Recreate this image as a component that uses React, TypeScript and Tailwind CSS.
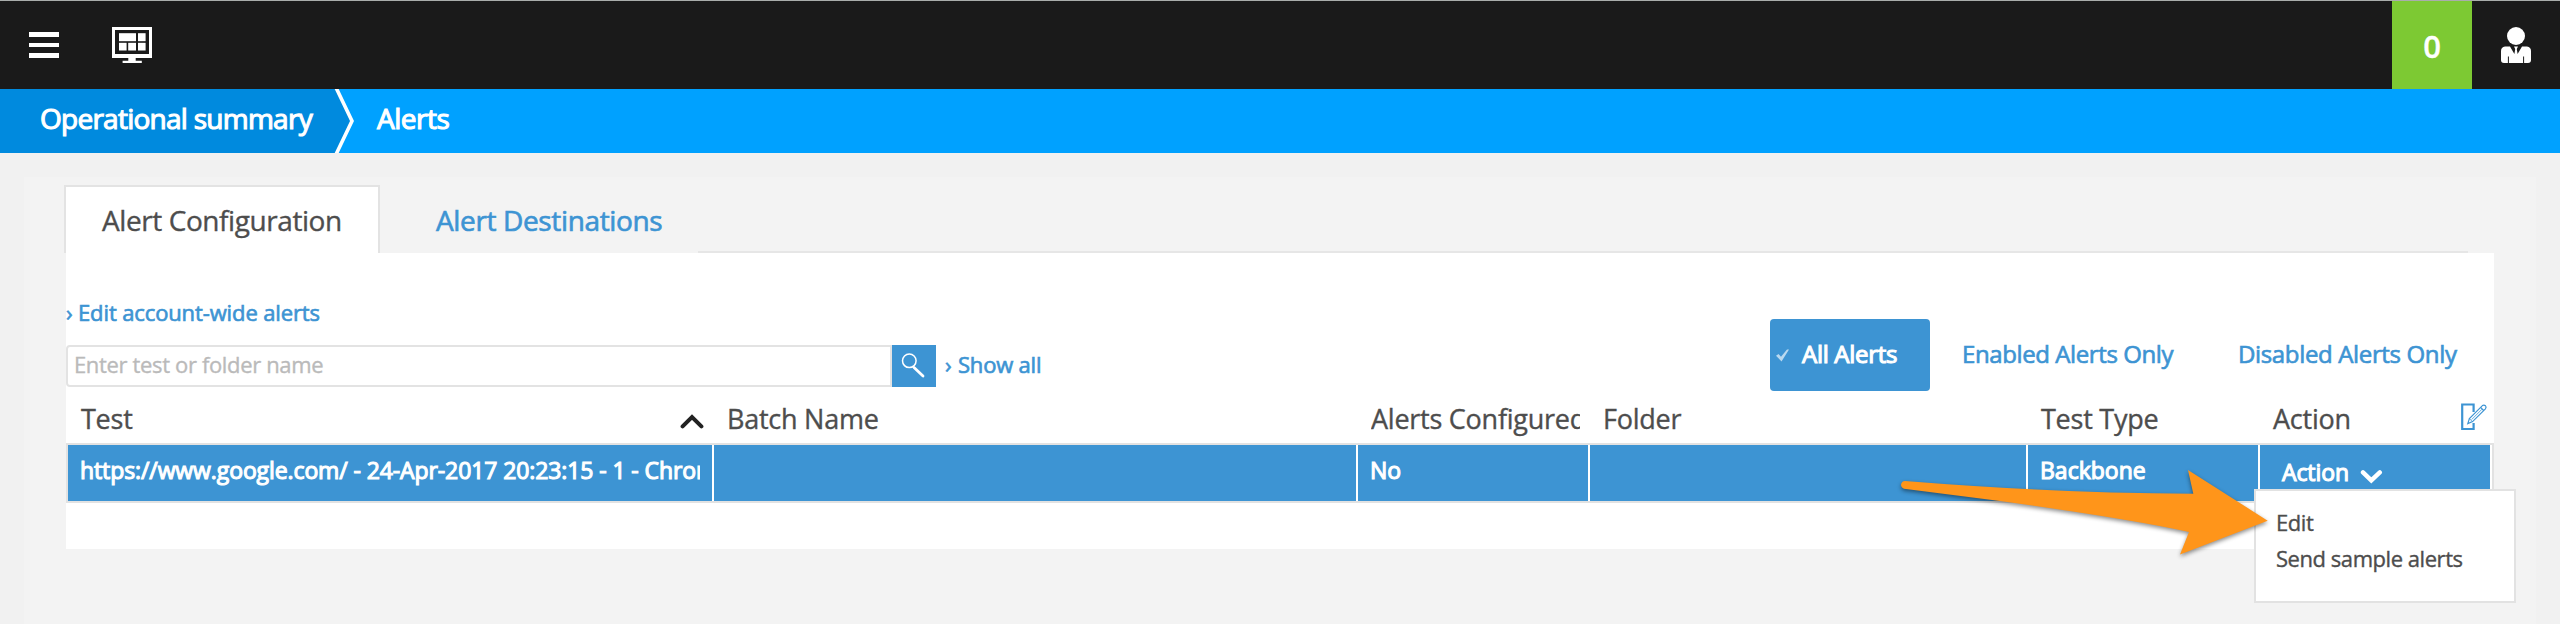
import type { ReactNode } from "react";

const COLUMNS = "grid grid-cols-[646px_644px_232px_438px_232px_232px]";
const BOLDER = "[-webkit-text-stroke:1.1px_currentColor]";
const MEDIUM = "[-webkit-text-stroke:0.65px_currentColor]";
const REGULAR = "[-webkit-text-stroke:0.35px_currentColor]";

function MonitorIcon() {
  return (
    <svg width="40" height="36" viewBox="0 0 40 36" fill="#fff">
      <path fillRule="evenodd" d="M0 0H40V31H0ZM3 3V27H37V3Z" />
      <rect x="7" y="6.2" width="17" height="8" />
      <rect x="26" y="6.2" width="7.6" height="8" />
      <rect x="7" y="15.8" width="7.6" height="7.7" />
      <rect x="16.2" y="15.8" width="7.8" height="7.7" />
      <rect x="26" y="15.8" width="7.6" height="7.7" />
      <path d="M16.3 31H23.7V33.8H29.8V36H10.6V33.8H16.3Z" />
    </svg>
  );
}

function UserIcon() {
  return (
    <svg width="30" height="36" viewBox="0 0 30 36">
      <circle cx="15" cy="9" r="9" fill="#fff" />
      <path
        d="M4 19.4H9L13.4 27L14.2 22L13 19.6H17L15.8 22L16.6 27L21 19.4H26Q30 20 30 24V33Q30 36 27 36H3Q0 36 0 33V24Q0 20 4 19.4Z"
        fill="#fff"
      />
      <path d="M7.4 29.5V36M22.6 29.5V36" stroke="#1a1a1a" strokeWidth="1" />
    </svg>
  );
}

function EditIcon() {
  return (
    <svg width="28" height="28" viewBox="0 0 28 28" fill="none" stroke="#3d94d3">
      <path d="M13.6 9V1.5H2.2V26H13.6V20" strokeWidth="2.2" />
      <path d="M7.8 20.6L9.4 15.6L22.4 2.6Q24 1.4 25.4 2.7Q26.8 4.2 25.4 5.8L12.6 18.6ZM20.6 4.4L23.7 7.5" strokeWidth="1.2" fill="#fff" />
      <path d="M9.4 15.6L12.4 18.6M11.6 16.6L22 6.2" strokeWidth="0.8" />
    </svg>
  );
}

function Th({ children }: { children?: ReactNode }) {
  return <div className="flex items-center justify-between pl-[13px] pr-[10px] whitespace-nowrap overflow-hidden">{children}</div>;
}

function Td({ children }: { children?: ReactNode }) {
  return (
    <div className="flex items-center border-r-2 border-white pl-3 pr-3 pb-1.5">
      <div className="w-full overflow-hidden whitespace-nowrap">{children}</div>
    </div>
  );
}

export default function App() {
  return (
    <div className={`relative h-[624px] w-[2560px] overflow-hidden bg-[#f1f1f1] text-[#4d4d4d] [font-family:'Open_Sans','Noto_Sans',sans-serif] ${REGULAR}`}>
      <header className="flex h-[89px] justify-between border-t border-[#a9adab] bg-[#1a1a1a]">
        <div className="flex">
          <div className="flex flex-col gap-[6px] pl-[29px] pt-[31px]">
            <div className="h-[4.6px] w-[30px] bg-white" />
            <div className="h-[4.6px] w-[30px] bg-white" />
            <div className="h-[4.6px] w-[30px] bg-white" />
          </div>
          <div className="pl-[53px] pt-[26px]">
            <MonitorIcon />
          </div>
        </div>
        <div className="flex">
          <div className="flex w-20 items-center justify-center bg-[#7dc933] pt-0.5 text-[31px] font-semibold text-white">0</div>
          <div className="w-[88px] pl-[29px] pt-[26px]">
            <UserIcon />
          </div>
        </div>
      </header>

      <nav className={`flex h-16 bg-[#00a1ff] text-[28px] leading-[58px] text-white ${BOLDER}`}>
        <div className="w-[334px] bg-[#008ade] pl-10 tracking-[-0.74px] whitespace-nowrap">Operational summary</div>
        <svg width="20" height="64" viewBox="0 0 20 64">
          <path d="M0 0H2L18 32L2 64H0Z" fill="#008ade" />
          <path d="M2.2 -1L18 32L2.2 65" fill="none" stroke="#fff" strokeWidth="3.6" />
        </svg>
        <div className="pl-[23px] tracking-[-0.5px]">Alerts</div>
      </nav>

      <main className="mx-6 mt-6 h-[447px] bg-[#f3f3f3] pt-2">
        <div className="flex h-[68px] pl-10 text-[28px] leading-[66px] whitespace-nowrap">
          <div className="w-[316px] border-2 border-b-0 border-[#e3e3e3] bg-white pl-9 tracking-[-0.42px]">Alert Configuration</div>
          <div className={`w-[318px] pl-14 pt-0.5 tracking-[-0.36px] text-[#3d94d3] ${MEDIUM}`}>Alert Destinations</div>
          <div className="w-[1770px] border-b-2 border-[#e6e6e6]" />
        </div>

        <section className="ml-[42px] h-[296px] w-[2428px] bg-white">
          <div className={`flex h-[138px] justify-between text-[#3d94d3] ${MEDIUM}`}>
            <div className="pt-[43px]">
              <div className="flex h-8 items-center text-[22px] whitespace-nowrap">
                <span className="w-3">›</span>
                <span className="tracking-[-0.12px]">Edit account-wide alerts</span>
              </div>
              <div className="mt-[17px] flex h-[42px]">
                <div className={`w-[826px] rounded-l-[4px] border-2 border-[#e3e3e3] pl-1.5 text-[22px] leading-[34px] tracking-[-0.35px] text-[#bababa] ${REGULAR}`}>
                  Enter test or folder name
                </div>
                <div className="w-11 bg-[#3d94d3] pl-[9px] pt-[7px]">
                  <svg width="26" height="28" viewBox="0 0 26 28" fill="none" stroke="#fff">
                    <circle cx="8.3" cy="8.8" r="6.8" strokeWidth="1.5" />
                    <path d="M13 15.5L22 24" strokeWidth="2.8" strokeLinecap="round" />
                  </svg>
                </div>
                <div className="flex pl-[9px] text-[22px] leading-[38px] whitespace-nowrap">
                  <span className="w-[13px]">›</span>
                  <span className="tracking-[-0.2px]">Show all</span>
                </div>
              </div>
            </div>
            <div className="flex h-[72px] self-end text-[24px] leading-[69px] tracking-[-0.4px] whitespace-nowrap">
              <div className={`flex w-40 items-start rounded-[4px] bg-[#3d94d3] pl-1.5 text-white ${BOLDER}`}>
                <svg className="mt-[30px]" width="13" height="13" viewBox="0 0 13 13">
                  <path d="M0 6.8L2.5 5L5 7.8L11 0.5H13L5.5 12.4Z" fill="#b9d9f0" />
                </svg>
                <span className="pl-[13px] tracking-[-0.3px]">All Alerts</span>
              </div>
              <div className="w-[277px] pl-8">Enabled Alerts Only</div>
              <div className="w-[287px] pl-[31px] tracking-[-0.35px]">Disabled Alerts Only</div>
            </div>
          </div>

          <div className={`${COLUMNS} h-[52px] pl-0.5 pt-[4px] text-[27px] tracking-[-0.25px]`}>
            <Th>
              <span>Test</span>
              <svg className="mt-1" width="24" height="15" viewBox="0 0 24 15">
                <path d="M2.6 12.4L12 3L21.4 12.4" fill="none" stroke="#222" strokeWidth="4" strokeLinecap="round" />
              </svg>
            </Th>
            <Th>Batch Name</Th>
            <Th><span className="w-full overflow-hidden">Alerts Configured</span></Th>
            <Th>Folder</Th>
            <Th>Test Type</Th>
            <div className="flex items-center justify-between pl-[13px] pr-1">
              <span>Action</span>
              <span className="-mt-1"><EditIcon /></span>
            </div>
          </div>

          <div className={`${COLUMNS} h-[60px] border-2 border-[#e2e2e2] bg-[#3d94d3] text-[23px] text-white ${BOLDER}`}>
            <Td><span className="tracking-[-0.1px]">https://www.google.com/ - 24-Apr-2017 20:23:15 - 1 - Chrome</span></Td>
            <Td />
            <Td>No</Td>
            <Td />
            <Td>Backbone</Td>
            <div className="flex items-center border-r-2 border-white pb-0.5 pl-[22px]">
              <span className="tracking-[-0.1px]">Action</span>
              <svg className="ml-[11px] mt-2" width="23" height="15" viewBox="0 0 23 15">
                <path d="M3 3.4L11.3 11.4L19.8 3.4" fill="none" stroke="#fff" strokeWidth="4.4" strokeLinecap="round" />
              </svg>
            </div>
          </div>
        </section>
      </main>

      <div className="absolute left-[2254px] top-[489px] h-[114px] w-[262px] border-2 border-[#e2e2e2] bg-white pl-5 pt-[13px] text-[22px] leading-9 tracking-[-0.45px] whitespace-nowrap">
        <div>Edit</div>
        <div>Send sample alerts</div>
      </div>

      <svg className="absolute left-[1890px] top-[460px] drop-shadow-[0_2px_2px_rgba(0,0,0,0.45)]" width="390" height="110" viewBox="1890 460 390 110">
        <path
          d="M1905 481Q2060 493.5 2193.3 493.7L2188 470L2267.7 520.7L2180 554.5L2189 532Q2130 519 2000 501L1904 488.7Q1901 487.5 1901 484.8Q1901.5 481 1905 481Z"
          fill="#ff951a"
        />
      </svg>
    </div>
  );
}
